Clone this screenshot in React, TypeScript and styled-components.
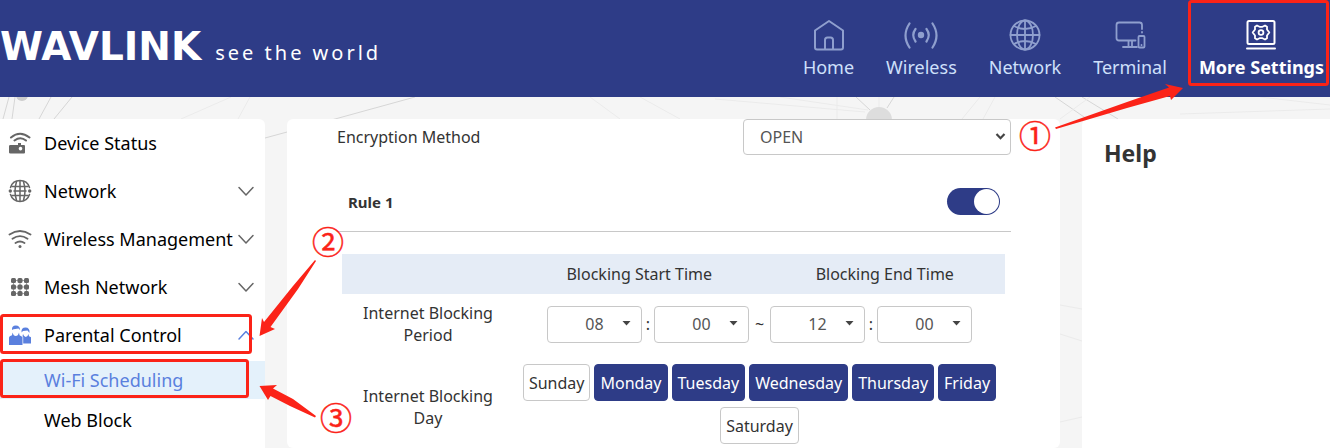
import React, { useState } from "react";
import styled, { createGlobalStyle, css } from "styled-components";

const navy = "#2e3c87";
const accent = "#5a80de";
const red = "#fb2318";

const GlobalStyle = createGlobalStyle`
  *, *::before, *::after { box-sizing: border-box; }
  body {
    margin: 0;
    background: #f5f5f5;
    color: #333;
    font-family: "Noto Sans", "Noto Sans CJK SC", sans-serif;
    font-size: 16px;
  }
  button, input, select { font: inherit; margin: 0; }
  svg { display: block; flex: none; }
`;

const Page = styled.div`
  position: relative;
  min-height: 100vh;
  display: flex;
  flex-direction: column;
  overflow: hidden;
`;

const Header = styled.header`
  position: relative;
  display: flex;
  align-items: stretch;
  justify-content: space-between;
  height: 97px;
  padding-right: 6px;
  background: ${navy};
`;

const Brand = styled.a`
  display: flex;
  align-items: baseline;
  gap: 14px;
  padding-top: 24px;
  color: #fff;
  text-decoration: none;
  white-space: nowrap;
`;

const Wordmark = styled.span`
  font-family: "DejaVu Sans", sans-serif;
  font-size: 39px;
  line-height: 46px;
  font-weight: 700;
`;

const Tagline = styled.span`
  font-family: "Noto Sans", sans-serif;
  font-size: 20px;
  letter-spacing: 3px;
`;

const TopNav = styled.nav`
  display: flex;
  gap: 32px;
`;

const NavLink = styled.a<{ $active?: boolean }>`
  display: flex;
  flex-direction: column;
  align-items: center;
  gap: 1px;
  padding-top: 18px;
  color: ${(p) => (p.$active ? "#fff" : "#cfe0fb")};
  font-size: 18px;
  line-height: 28px;
  font-weight: ${(p) => (p.$active ? 700 : 400)};
  text-decoration: none;
  white-space: nowrap;
  svg { color: ${(p) => (p.$active ? "#fff" : "#8f9fce")}; }
`;

const Columns = styled.div`
  flex: 1;
  position: relative;
  display: grid;
  grid-template-columns: 265px minmax(0, 1fr) 248px;
  gap: 22px;
  padding-top: 22px;
`;

const Backdrop = styled.svg`
  position: absolute;
  left: 0;
  top: 97px;
`;

const Sidebar = styled.nav`
  background: #fff;
  border-top-right-radius: 6px;
`;

const MenuItem = styled.a<{ $open?: boolean }>`
  display: flex;
  align-items: center;
  gap: 12px;
  height: 48px;
  padding: 0 10px 0 8px;
  color: #000;
  font-size: 18px;
  text-decoration: none;
  white-space: nowrap;
  svg { color: ${(p) => (p.$open ? accent : "#666")}; }
  span { flex: 1; min-width: 0; }
`;

const SubItem = styled.a<{ $current?: boolean }>`
  display: block;
  margin: 2px 0;
  padding-left: 44px;
  color: ${(p) => (p.$current ? accent : "#000")};
  background: ${(p) => (p.$current ? "#e4f1fb" : "transparent")};
  font-size: 18px;
  line-height: 38px;
  text-decoration: none;
`;

const Panel = styled.main`
  padding: 0 49px 0 50px;
  background: #fff;
  border-radius: 6px;
`;

const FieldRow = styled.div`
  display: flex;
  align-items: center;
  justify-content: space-between;
`;

const SelectBox = styled.div<{ $wide?: boolean }>`
  position: relative;
  width: ${(p) => (p.$wide ? "268px" : "95px")};
  height: ${(p) => (p.$wide ? "36px" : "37px")};
  svg {
    position: absolute;
    pointer-events: none;
    color: #444;
    right: ${(p) => (p.$wide ? "5px" : "11px")};
    top: ${(p) => (p.$wide ? "13px" : "15px")};
  }
`;

const Select = styled.select<{ $wide?: boolean }>`
  appearance: none;
  width: 100%;
  height: 100%;
  padding: 0 16px;
  border: 1px solid #c8c8c8;
  border-radius: 4px;
  background: #fff;
  color: #555;
  ${(p) => !p.$wide && css`text-align-last: center;`}
`;

const RuleHeader = styled.div`
  display: flex;
  align-items: center;
  justify-content: space-between;
  height: 60px;
  margin-top: 17px;
  padding: 0 11px;
  border-bottom: 1px solid #c8c8c8;
`;

const RuleTitle = styled.label`
  font-size: 15px;
  font-weight: 700;
`;

const Switch = styled.input`
  appearance: none;
  width: 53px;
  height: 27px;
  padding: 1px;
  border-radius: 14px;
  background: #bbb;
  display: flex;
  cursor: pointer;
  &::before {
    content: "";
    width: 25px;
    height: 25px;
    border-radius: 50%;
    background: #fff;
  }
  &:checked { background: ${navy}; justify-content: flex-end; }
`;

const ScheduleWrap = styled.div`
  padding: 22px 6px 0 5px;
`;

const Schedule = styled.table`
  width: 100%;
  table-layout: fixed;
  border-collapse: collapse;
  text-align: center;
  line-height: 22px;
  thead { background: #e5ecf6; }
  th, td { padding: 0; font-weight: 400; }
`;

const LabelCol = styled.col`
  width: 172px;
`;

const HeadRow = styled.tr`
  height: 40px;
  th { padding-left: 5px; }
`;

const PeriodRow = styled.tr`
  height: 60px;
`;

const RowLabel = styled.span<{ $low?: boolean }>`
  display: block;
  padding: ${(p) => (p.$low ? "16px" : "0")} 18px 0;
`;

const Period = styled.div`
  display: flex;
  align-items: center;
  justify-content: center;
`;

const Separator = styled.span<{ $range?: boolean }>`
  width: ${(p) => (p.$range ? "21px" : "12px")};
`;

const Days = styled.div`
  display: flex;
  flex-wrap: wrap;
  justify-content: center;
  gap: 6px 4px;
  padding-top: 10px;
`;

const DayButton = styled.button`
  height: 37px;
  padding: 0 5px;
  border: 1px solid #c8c8c8;
  border-radius: 4px;
  background: #fff;
  color: #333;
  cursor: pointer;
  &[aria-pressed="true"] {
    border-color: ${navy};
    background: ${navy};
    color: #fff;
  }
`;

const Help = styled.aside`
  padding: 18px 22px;
  background: #fff;
  border-top-left-radius: 6px;
  h2 { margin: 0; font-size: 23px; line-height: 32px; font-weight: 700; }
`;

const Callouts = styled.svg<{ $side: "left" | "right" }>`
  position: absolute;
  top: 0;
  ${(p) => p.$side}: 0;
  z-index: 2;
  pointer-events: none;
  overflow: visible;
  fill: ${red};
  rect { fill: none; stroke: ${red}; stroke-width: 3; }
  text {
    font-family: "Noto Sans CJK SC", sans-serif;
    font-size: 32px;
    font-weight: 400;
    text-anchor: middle;
    stroke: ${red};
    stroke-width: 0.5;
  }
`;

const line = { fill: "none", stroke: "currentColor", strokeLinecap: "round", strokeLinejoin: "round" } as const;

const HomeIcon = () => (
  <svg width="34" height="34" viewBox="0 0 34 34" {...line} strokeWidth="2">
    <path d="M3 12.500 17 3 31 12.500V29.500q0 2-2 2h-24q-2 0-2-2Z" />
    <path d="M13 31V22q0-2.500 2.500-2.500h3q2.500 0 2.500 2.500V31" />
  </svg>
);

const SignalIcon = () => (
  <svg width="36" height="34" viewBox="0 0 36 34" {...line} strokeWidth="2.200">
    <circle cx="18" cy="17" r="3.200" fill="currentColor" stroke="none" />
    <path d="M12.500 11q-4.500 6 0 12.500M23.500 11q4.500 6 0 12.500M6.500 5.500q-8 12 0 24M29.500 5.500q8 12 0 24" />
  </svg>
);

const GlobeIcon = () => (
  <svg width="34" height="34" viewBox="0 0 34 34" {...line} strokeWidth="1.800">
    <circle cx="17" cy="17" r="14.500" />
    <ellipse cx="17" cy="17" rx="8" ry="14.500" />
    <path d="M17 2.500v29M2.500 17h29M6 8q11 6 22 0M6 26q11-6 22 0" />
  </svg>
);

const TerminalIcon = () => (
  <svg width="34" height="34" viewBox="0 0 34 34" {...line} strokeWidth="1.800">
    <path d="M22.500 22.500H6q-2.500 0-2.500-2.500V7Q3.500 4.500 6 4.500h20.500Q29 4.500 29 7v4M15.500 22.500v6M19 22.500v6M10 29h14M29 14v.5" />
    <rect x="25.500" y="18" width="6" height="11.500" rx="1" />
    <path d="M28.500 27v.2" />
  </svg>
);

const SettingsIcon = () => (
  <svg width="34" height="34" viewBox="0 0 34 34" {...line} strokeWidth="2">
    <rect x="3.500" y="3" width="27" height="23" rx="1.500" />
    <path d="M3 30.500h28" />
    <path d="M13 7.500l2.500 1.300h3L21 7.500l2 1.300v2.700l2.300 3-2.300 3v2.700L21 21.500l-2.500-1.300h-3L13 21.500l-2-1.300v-2.700l-2.300-3 2.300-3V8.800Z" strokeWidth="1.800" />
    <circle cx="17" cy="14.500" r="2.400" strokeWidth="1.800" />
  </svg>
);

const StatusIcon = () => (
  <svg width="24" height="24" viewBox="0 0 24 24" {...line} strokeWidth="2">
    <path d="M3 6.500Q12-1 21.500 6.500M6.500 9.500Q12.500 5 18 9.500" />
    <path fill="currentColor" stroke="none" fillRule="evenodd" d="M2.500 14H10v-2h3v2h3q1 0 1 1v6.500q0 1-1 1H2.500q-1.500 0-1.500-1V15q0-1 1.500-1ZM12.500 15.800a1.800 1.800 0 1 0 .01 0Z" />
  </svg>
);

const NetworkIcon = () => (
  <svg width="24" height="24" viewBox="0 0 24 24" {...line} strokeWidth="1.500">
    <path d="M2.500 8.500a10 10 0 0 1 19 0M2.500 15.500a10 10 0 0 0 19 0" />
    <path d="M8.500 2.800Q5.500 12 8.500 21.200M15.500 2.800Q18.500 12 15.500 21.200M12 2v20M4 7.500h16M4 16.500h16M6 12h12" />
    <circle cx="2.300" cy="12" r="1.700" fill="currentColor" stroke="none" />
    <circle cx="21.700" cy="12" r="1.700" fill="currentColor" stroke="none" />
  </svg>
);

const WifiIcon = () => (
  <svg width="24" height="24" viewBox="0 0 24 24" {...line} strokeWidth="1.800">
    <path d="M1.500 7.500Q12 .5 22.500 7.500M4.500 11.800Q12 6.500 19.500 11.800M7.500 16q4.500-3 9 0" />
    <circle cx="12" cy="19.500" r="1.500" fill="currentColor" stroke="none" />
  </svg>
);

const MeshIcon = () => (
  <svg width="24" height="24" viewBox="0 0 24 24" fill="currentColor">
    {[3, 9.5, 16].map((y) =>
      [3, 9.5, 16].map((x) => <rect key={`${x}-${y}`} x={x} y={y} width="5" height="5" rx="1.500" />)
    )}
    <path d="M3 5h18v1H3ZM3 11.500h18v1H3ZM3 18h18v1H3ZM5 3h1v18H5ZM11.500 3h1v18h-1ZM18 3h1v18h-1Z" opacity=".6" />
  </svg>
);

const ParentsIcon = () => (
  <svg width="24" height="24" viewBox="0 0 24 24" fill="currentColor">
    <path d="M4 7Q3.500 2.500 7.800 2.500T12 7L10.500 5.500 5.500 6.200ZM4.500 9.500q1 3.500 3.300 3.500T11 9.500l.5 2.800 3 1.700v8H1v-7.500q0-1.500 3-2.200Z" />
    <path d="M13.500 9.500Q13 4.500 17.500 4.500T21.500 10L19.500 7.500 15 8ZM15 11q1 3 2.800 3t2.700-3l.5 2.200 2 1v6.300H15.200V14l-.7-.7Z" />
  </svg>
);

const Chevron = ({ up = false }: { up?: boolean }) => (
  <svg width="18" height="18" viewBox="0 0 18 18" {...line} strokeWidth="1.500">
    <path d={up ? "M2 13 9 5.500 16 13" : "M2 5.500 9 13 16 5.500"} />
  </svg>
);

const topLinks = [
  { label: "Home", Icon: HomeIcon },
  { label: "Wireless", Icon: SignalIcon },
  { label: "Network", Icon: GlobeIcon },
  { label: "Terminal", Icon: TerminalIcon },
  { label: "More Settings", Icon: SettingsIcon, active: true },
];

const menu = [
  { label: "Device Status", Icon: StatusIcon, leaf: true },
  { label: "Network", Icon: NetworkIcon },
  { label: "Wireless Management", Icon: WifiIcon },
  { label: "Mesh Network", Icon: MeshIcon },
  { label: "Parental Control", Icon: ParentsIcon, open: true },
];

const dayNames = ["Sunday", "Monday", "Tuesday", "Wednesday", "Thursday", "Friday", "Saturday"];

const range = (n: number) => Array.from({ length: n }, (_, i) => String(i).padStart(2, "0"));

function TimeSelect({ label, value, count }: { label: string; value: string; count: number }) {
  return (
    <SelectBox>
      <Select aria-label={label} defaultValue={value}>
        {range(count).map((v) => (
          <option key={v}>{v}</option>
        ))}
      </Select>
      <svg width="9" height="5" viewBox="0 0 9 5" fill="currentColor">
        <path d="M.5 0h8l-4 4.500Z" />
      </svg>
    </SelectBox>
  );
}

export default function App() {
  const [days, setDays] = useState(dayNames.slice(1, 6));
  const toggle = (d: string) =>
    setDays((cur) => (cur.includes(d) ? cur.filter((x) => x !== d) : [...cur, d]));

  return (
    <>
      <GlobalStyle />
      <Page>
        <Backdrop width="1330" height="351" viewBox="0 97 1330 351" fill="none" stroke="#ebebeb" aria-hidden="true">
          <path stroke="#d6d6d6" d="M9 97 3 119M15 97l-3 22M51 97 39 119M72 97 54 119M415 97 335 119 265 138M856 97l14 13M894 97l-7 11M1055 97l32 22M1082 97l36 22" />
          <path d="M231 97l-50 22M250 97l-12 22M590 97l30 22M640 97l40 22M715 99l150 13M780 97l88 13M837 97v22M879 97v12M980 97l-18 22M995 97l-12 22M1090 97l-30 22M1260 97l70 8M1180 114l150-5M1060 305l22 4M1060 334l22 7M1060 422l22-5" />
          <circle cx="22" cy="95" r="6" fill="#ccc" stroke="none" />
          <circle cx="879" cy="120" r="13" fill="#ddd" stroke="none" />
        </Backdrop>

        <Header>
          <Brand href="#">
            <Wordmark>WAVLINK</Wordmark>
            <Tagline>see the world</Tagline>
          </Brand>
          <TopNav aria-label="Main">
            {topLinks.map(({ label, Icon, active }) => (
              <NavLink key={label} href="#" $active={active}>
                <Icon />
                {label}
              </NavLink>
            ))}
          </TopNav>
          <Callouts $side="right" width="330" height="160" viewBox="1000 0 330 160">
            <rect x="1189.500" y="1.500" width="138" height="83" rx="2" />
            <path d="M1055 127.500 1127 102 1169 87.500 1165 84 1183 88 1171 100 1170 96 1127 108 1056 129Z" />
            <text x="1035" y="148">①</text>
          </Callouts>
        </Header>

        <Columns>
          <Sidebar aria-label="Settings">
            {menu.map(({ label, Icon, leaf, open }) => (
              <MenuItem key={label} href="#" $open={open}>
                <Icon />
                <span>{label}</span>
                {!leaf && <Chevron up={open} />}
              </MenuItem>
            ))}
            <SubItem href="#" $current>Wi-Fi Scheduling</SubItem>
            <SubItem href="#">Web Block</SubItem>
          </Sidebar>

          <Panel>
            <FieldRow>
              <label htmlFor="encryption">Encryption Method</label>
              <SelectBox $wide>
                <Select id="encryption" $wide defaultValue="OPEN">
                  <option>OPEN</option>
                </Select>
                <svg width="11" height="9" viewBox="0 0 11 9" fill="none" stroke="currentColor" strokeWidth="2.200">
                  <path d="M1.500 2 5.500 6.200 9.500 2" />
                </svg>
              </SelectBox>
            </FieldRow>

            <RuleHeader>
              <RuleTitle htmlFor="rule-1">Rule 1</RuleTitle>
              <Switch id="rule-1" type="checkbox" role="switch" defaultChecked />
            </RuleHeader>

            <ScheduleWrap>
              <Schedule>
                <colgroup>
                  <LabelCol />
                  <col />
                  <col />
                </colgroup>
                <thead>
                  <HeadRow>
                    <td />
                    <th scope="col">Blocking Start Time</th>
                    <th scope="col">Blocking End Time</th>
                  </HeadRow>
                </thead>
                <tbody>
                  <PeriodRow>
                    <th scope="row">
                      <RowLabel>Internet Blocking Period</RowLabel>
                    </th>
                    <td colSpan={2}>
                      <Period>
                        <TimeSelect label="Start hour" value="08" count={24} />
                        <Separator>:</Separator>
                        <TimeSelect label="Start minute" value="00" count={60} />
                        <Separator $range>~</Separator>
                        <TimeSelect label="End hour" value="12" count={24} />
                        <Separator>:</Separator>
                        <TimeSelect label="End minute" value="00" count={60} />
                      </Period>
                    </td>
                  </PeriodRow>
                  <tr>
                    <th scope="row">
                      <RowLabel $low>Internet Blocking Day</RowLabel>
                    </th>
                    <td colSpan={2}>
                      <Days>
                        {dayNames.map((d) => (
                          <DayButton key={d} type="button" aria-pressed={days.includes(d)} onClick={() => toggle(d)}>
                            {d}
                          </DayButton>
                        ))}
                      </Days>
                    </td>
                  </tr>
                </tbody>
              </Schedule>
            </ScheduleWrap>
          </Panel>

          <Help>
            <h2>Help</h2>
          </Help>
        </Columns>

        <Callouts $side="left" width="360" height="448" viewBox="0 0 360 448">
          <rect x="1.500" y="315.500" width="249" height="37" rx="2" />
          <rect x="1.500" y="360.500" width="246" height="36" rx="2" />
          <path d="M315 260 293 286 264 322 262 318 259.500 336 275 329 270.500 327 298 289 316 261Z" />
          <path d="M316 416 293 399 273 388.500 277 385 259.500 386 268 400 270.500 396 290 406 315 417.500Z" />
          <text x="328" y="254">②</text>
          <text x="336" y="430">③</text>
        </Callouts>
      </Page>
    </>
  );
}
